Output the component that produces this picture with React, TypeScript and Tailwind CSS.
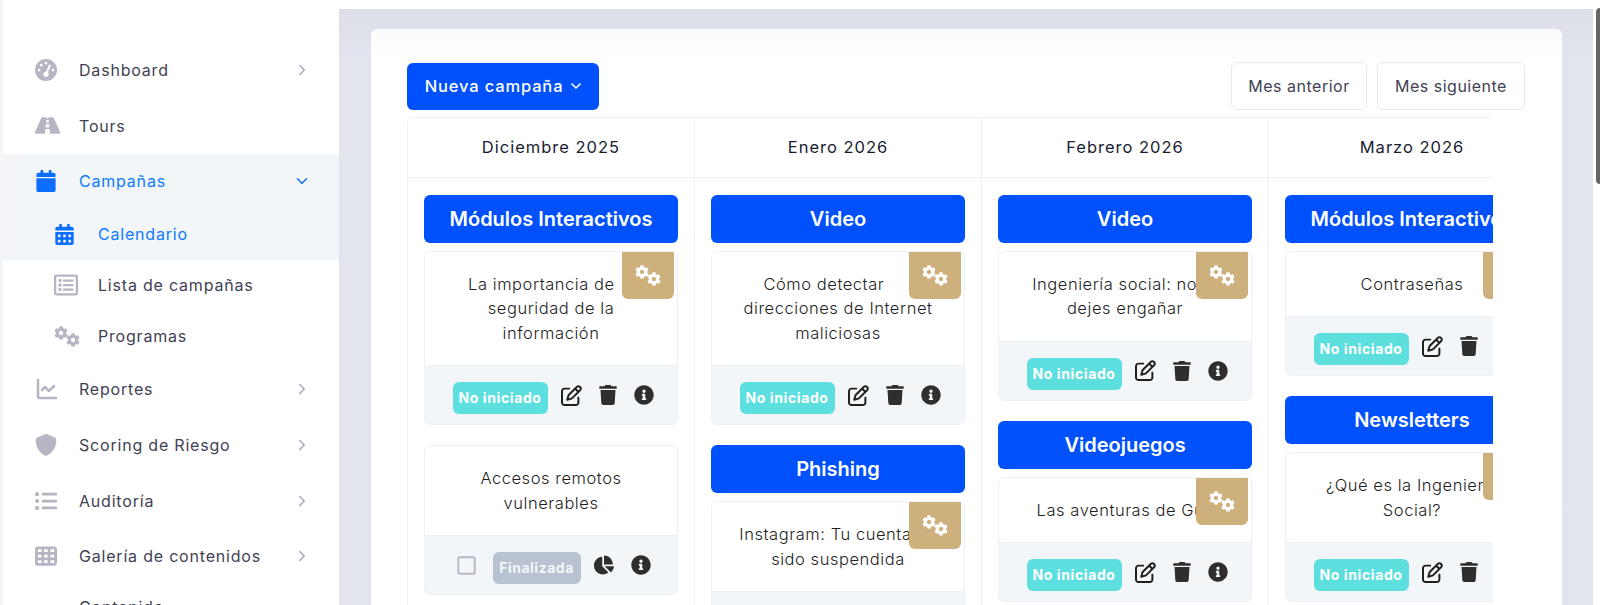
import { ChartLine, ChevronDown, ChevronRight } from "lucide-react";
import {
  FaCalendar,
  FaCalendarAlt,
  FaChartPie,
  FaCog,
  FaInfoCircle,
  FaListUl,
  FaRegListAlt,
  FaRegSquare,
  FaRoad,
  FaTrash,
} from "react-icons/fa";
import { FaGaugeHigh, FaRegPenToSquare, FaShield, FaTableCells } from "react-icons/fa6";

function Gears() {
  // two overlapping gears, one up-left and one down-right
  return (
    <span className="relative block h-[21px] w-[26px]">
      <FaCog className="absolute left-0 top-0" size={14} />
      <FaCog className="absolute bottom-0 right-0" size={14} />
    </span>
  );
}

function NavItem({ icon, label, arrow = true }: { icon?: React.ReactNode; label: string; arrow?: boolean }) {
  return (
    <div className="flex h-[55.6px] items-center pl-8 pr-7 text-[#3f4254]">
      <span className="flex w-11 text-[22px] text-[#b5b5c3]">{icon}</span>
      <span className="flex-1 text-base tracking-[0.8px]">{label}</span>
      {arrow && <ChevronRight size={18} className="text-[#a9a9b6]" />}
    </div>
  );
}

function SubItem({ icon, label, active }: { icon: React.ReactNode; label: string; active?: boolean }) {
  return (
    <div className={`flex h-[51px] items-center pl-[51px] text-base tracking-[0.8px] ${active ? "text-[#0d7bff]" : "text-[#3f4254]"}`}>
      <span className={`flex w-[44px] text-[24px] ${active ? "text-[#0d6efd]" : "text-[#b5b5c3]"}`}>{icon}</span>
      {label}
    </div>
  );
}

function Sidebar() {
  return (
    <aside className="ml-[3px] h-full w-[336px] shrink-0 overflow-hidden bg-white pt-[42.5px]">
      <NavItem icon={<FaGaugeHigh />} label="Dashboard" />
      <NavItem icon={<FaRoad className="text-[25px]" />} label="Tours" arrow={false} />
      <div className="h-[106px] bg-[#f3f6f9]">
        <div className="flex h-[55px] items-center pl-8 pr-7 text-[#0d7bff]">
          <span className="flex w-11 text-[22px] text-[#0d6efd]"><FaCalendar /></span>
          <span className="flex-1 text-base tracking-[0.8px]">Campañas</span>
          <ChevronDown size={18} className="text-[#0d6efd]" />
        </div>
        <SubItem icon={<FaCalendarAlt className="text-[21px]" />} label="Calendario" active />
      </div>
      <SubItem icon={<FaRegListAlt />} label="Lista de campañas" />
      <SubItem icon={<Gears />} label="Programas" />
      <NavItem icon={<ChartLine size={24} strokeWidth={2.5} />} label="Reportes" />
      <NavItem icon={<FaShield />} label="Scoring de Riesgo" />
      <NavItem icon={<FaListUl />} label="Auditoría" />
      <NavItem icon={<FaTableCells />} label="Galería de contenidos" />
      <div className="-mt-[5px]">
        <NavItem label="Contenido" arrow={false} />
      </div>
    </aside>
  );
}

// text after the | sits under the gold badge, so it keeps its room but isn't painted
function Campaign({ lines, done }: { lines: string[]; done?: boolean }) {
  return (
    <div className="relative mb-5 overflow-hidden rounded-md border border-[#eef0f5] bg-white">
      {!done && (
        <div className="absolute right-[3px] top-0 flex h-[47px] w-[52px] items-center justify-center rounded-b-md bg-[#cdb07c] text-white">
          <Gears />
        </div>
      )}
      <div className="px-2 pb-5 pt-5 text-center text-[16.5px] font-light leading-[24.4px] tracking-[0.55px] text-[#1d1d22]">
        {lines.map((line) => {
          const [shown, hidden] = line.split("|");
          return (
            <div key={line} className="whitespace-nowrap">
              {shown}
              {hidden && <span className="invisible">{hidden}</span>}
            </div>
          );
        })}
      </div>
      <div className="flex h-[59px] items-center justify-center border-t border-[#eef0f5] bg-[#f3f6f9] pl-[4px] text-[20px] text-[#2e2e2e]">
        {done ? (
          <>
            <FaRegSquare className="mr-[16px] text-[21px] text-[#b9b9c6]" />
            <span className="mr-[13px] mt-[6px] flex h-8 w-[88px] items-center justify-center rounded-md bg-[#b8c2d0] text-sm font-bold tracking-[0.5px] text-[#f3f6f9]">Finalizada</span>
            <FaChartPie className="mr-[17px]" />
            <FaInfoCircle />
          </>
        ) : (
          <>
            <span className="mr-[13px] mt-[6px] flex h-8 w-[95px] items-center justify-center rounded-md bg-[#5ddfe0] text-sm font-bold tracking-[0.6px] text-white">No iniciado</span>
            <FaRegPenToSquare className="mr-[16px] text-[21px] text-[#1f1f1f]" />
            <FaTrash className="mr-[16px]" />
            <FaInfoCircle />
          </>
        )}
      </div>
    </div>
  );
}

function Group({ title, children }: { title: string; children: React.ReactNode }) {
  return (
    <>
      <div className="mb-2 flex h-12 items-center justify-center whitespace-nowrap rounded-md bg-[#0050fb] text-xl font-semibold text-white">
        {title}
      </div>
      {children}
    </>
  );
}

const months = ["Diciembre 2025", "Enero 2026", "Febrero 2026", "Marzo 2026"];

function Calendar() {
  return (
    <div className="h-[488px] w-[1086px] overflow-hidden rounded-t-md border-l border-t border-[#eef0f5]">
      <div className="flex w-[1150px]">
        {months.map((month) => (
          <div key={month} className="flex h-[60px] w-[287px] shrink-0 items-center justify-center border-b border-r border-[#eef0f5] text-[16.5px] tracking-[1px] text-[#181c32]">
            {month}
          </div>
        ))}
      </div>
      <div className="flex w-[1150px]">
        <div className="h-[440px] w-[287px] shrink-0 border-r border-[#eef0f5] px-4 pt-[17px]">
          <Group title="Módulos Interactivos">
            <Campaign lines={["La importancia de| la", "seguridad de la", "información"]} />
          </Group>
          <Campaign lines={["Accesos remotos", "vulnerables"]} done />
        </div>
        <div className="h-[440px] w-[287px] shrink-0 border-r border-[#eef0f5] px-4 pt-[17px]">
          <Group title="Video">
            <Campaign lines={["Cómo detectar| las", "direcciones de Internet", "maliciosas"]} />
          </Group>
          <Group title="Phishing">
            <Campaign lines={["Instagram: Tu cuenta| ha", "sido suspendida"]} />
          </Group>
        </div>
        <div className="h-[440px] w-[287px] shrink-0 border-r border-[#eef0f5] px-4 pt-[17px]">
          <Group title="Video">
            <Campaign lines={["Ingeniería social: no| te", "dejes engañar"]} />
          </Group>
          <Group title="Videojuegos">
            <Campaign lines={["Las aventuras de Gu|s"]} />
          </Group>
        </div>
        <div className="h-[440px] w-[287px] shrink-0 border-r border-[#eef0f5] px-4 pt-[17px]">
          <Group title="Módulos Interactivos">
            <Campaign lines={["Contraseñas"]} />
          </Group>
          <Group title="Newsletters">
            <Campaign lines={["¿Qué es la Ingeniería", "Social?"]} />
          </Group>
        </div>
      </div>
    </div>
  );
}

export default function App() {
  return (
    <div className="flex h-[605px] w-[1600px] overflow-hidden bg-[#f5f5f7] font-['Inter',sans-serif]">
      <Sidebar />
      <main className="flex h-full flex-1 flex-col overflow-hidden bg-[#e2e5ee]">
        <div className="h-[9px] shrink-0 bg-white" />
        <div className="bg-gradient-to-b from-[#dcdee8] to-[#e2e5ee] to-[8%] pl-8 pr-[31px] pt-5">
          <section className="h-[600px] rounded-md bg-gradient-to-b from-[#fbfbfd] to-white to-[5%] pl-9 pt-[33px]">
            <div className="mb-[7px] flex w-[1118px] items-center justify-between">
              <button className="flex h-[47px] w-[192px] items-center justify-center gap-[5px] rounded-md bg-[#0050fb] pl-[3px] text-[16.5px] font-medium tracking-[0.85px] text-white">
                Nueva campaña <ChevronDown size={16} strokeWidth={2.5} />
              </button>
              <div className="flex gap-[10px]">
                <button className="h-[48px] w-[136px] rounded-md border border-[#e8eaf3] text-base tracking-[0.5px] text-[#3f4254]">Mes anterior</button>
                <button className="h-[48px] w-[148px] rounded-md border border-[#e8eaf3] text-base tracking-[0.5px] text-[#3f4254]">Mes siguiente</button>
              </div>
            </div>
            <Calendar />
          </section>
        </div>
      </main>
      <div className="relative w-[7px] shrink-0 bg-white">
        <div className="absolute right-0 top-2 h-[176px] w-1 rounded-l-full bg-[#666]" />
      </div>
    </div>
  );
}
